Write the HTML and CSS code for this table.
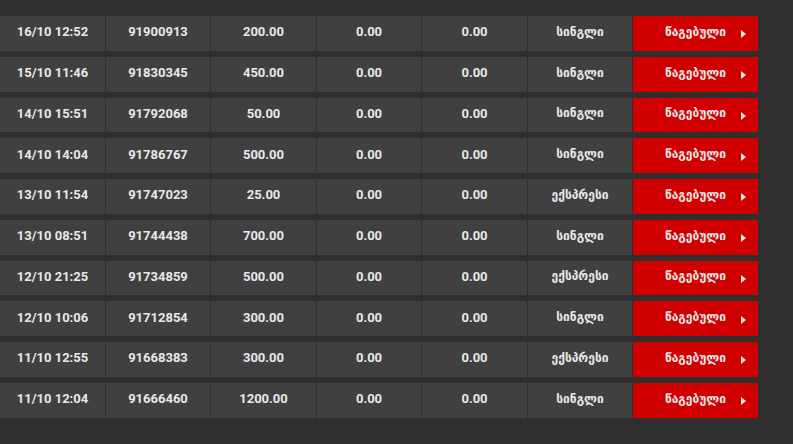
FILE: index.html
```html
<!DOCTYPE html>
<html lang="ka">
<head>
<meta charset="utf-8">
<link rel="stylesheet" href="styles.css">
</head>
<body>
<div class="table">
  <div class="row"><div class="cell">16/10 12:52</div><div class="cell">91900913</div><div class="cell">200.00</div><div class="cell">0.00</div><div class="cell">0.00</div><div class="cell ka">სინგლი</div><div class="cell ka lost"><span>წაგებული</span><i class="arrow"></i></div></div>
  <div class="row"><div class="cell">15/10 11:46</div><div class="cell">91830345</div><div class="cell">450.00</div><div class="cell">0.00</div><div class="cell">0.00</div><div class="cell ka">სინგლი</div><div class="cell ka lost"><span>წაგებული</span><i class="arrow"></i></div></div>
  <div class="row"><div class="cell">14/10 15:51</div><div class="cell">91792068</div><div class="cell">50.00</div><div class="cell">0.00</div><div class="cell">0.00</div><div class="cell ka">სინგლი</div><div class="cell ka lost"><span>წაგებული</span><i class="arrow"></i></div></div>
  <div class="row"><div class="cell">14/10 14:04</div><div class="cell">91786767</div><div class="cell">500.00</div><div class="cell">0.00</div><div class="cell">0.00</div><div class="cell ka">სინგლი</div><div class="cell ka lost"><span>წაგებული</span><i class="arrow"></i></div></div>
  <div class="row"><div class="cell">13/10 11:54</div><div class="cell">91747023</div><div class="cell">25.00</div><div class="cell">0.00</div><div class="cell">0.00</div><div class="cell ka">ექსპრესი</div><div class="cell ka lost"><span>წაგებული</span><i class="arrow"></i></div></div>
  <div class="row"><div class="cell">13/10 08:51</div><div class="cell">91744438</div><div class="cell">700.00</div><div class="cell">0.00</div><div class="cell">0.00</div><div class="cell ka">სინგლი</div><div class="cell ka lost"><span>წაგებული</span><i class="arrow"></i></div></div>
  <div class="row"><div class="cell">12/10 21:25</div><div class="cell">91734859</div><div class="cell">500.00</div><div class="cell">0.00</div><div class="cell">0.00</div><div class="cell ka">ექსპრესი</div><div class="cell ka lost"><span>წაგებული</span><i class="arrow"></i></div></div>
  <div class="row"><div class="cell">12/10 10:06</div><div class="cell">91712854</div><div class="cell">300.00</div><div class="cell">0.00</div><div class="cell">0.00</div><div class="cell ka">სინგლი</div><div class="cell ka lost"><span>წაგებული</span><i class="arrow"></i></div></div>
  <div class="row"><div class="cell">11/10 12:55</div><div class="cell">91668383</div><div class="cell">300.00</div><div class="cell">0.00</div><div class="cell">0.00</div><div class="cell ka">ექსპრესი</div><div class="cell ka lost"><span>წაგებული</span><i class="arrow"></i></div></div>
  <div class="row"><div class="cell">11/10 12:04</div><div class="cell">91666460</div><div class="cell">1200.00</div><div class="cell">0.00</div><div class="cell">0.00</div><div class="cell ka">სინგლი</div><div class="cell ka lost"><span>წაგებული</span><i class="arrow"></i></div></div>
</div>
</body>
</html>
```
FILE: styles.css
```css
html, body {
  margin: 0;
  padding: 0;
  background: #2f2f2f;
  height: 100%;
}
body {
  font-family: "Roboto", "DejaVu Sans", sans-serif;
  font-weight: 700;
  font-size: 13px;
  color: #e8e8e8;
}
.table {
  padding-top: 16px;
  display: flex;
  flex-direction: column;
  gap: 6px;
  width: 758px;
}
.row {
  display: grid;
  grid-template-columns: 105px 104px 105px 104px 105px 104px 125px;
  column-gap: 1px;
  height: 34.75px;
}
.cell {
  background: #404040;
  display: flex;
  align-items: center;
  justify-content: center;
  white-space: nowrap;
  padding-bottom: 3px;
  box-sizing: border-box;
}
.ka {
  font-size: 12px;
}
.lost {
  background: #d00000;
  gap: 15px;
  padding-left: 20px;
}
.arrow {
  display: block;
  width: 0;
  height: 0;
  border-top: 4px solid transparent;
  border-bottom: 4px solid transparent;
  border-left: 5px solid #e8e8e8;
  margin-top: 5px;
}
```
